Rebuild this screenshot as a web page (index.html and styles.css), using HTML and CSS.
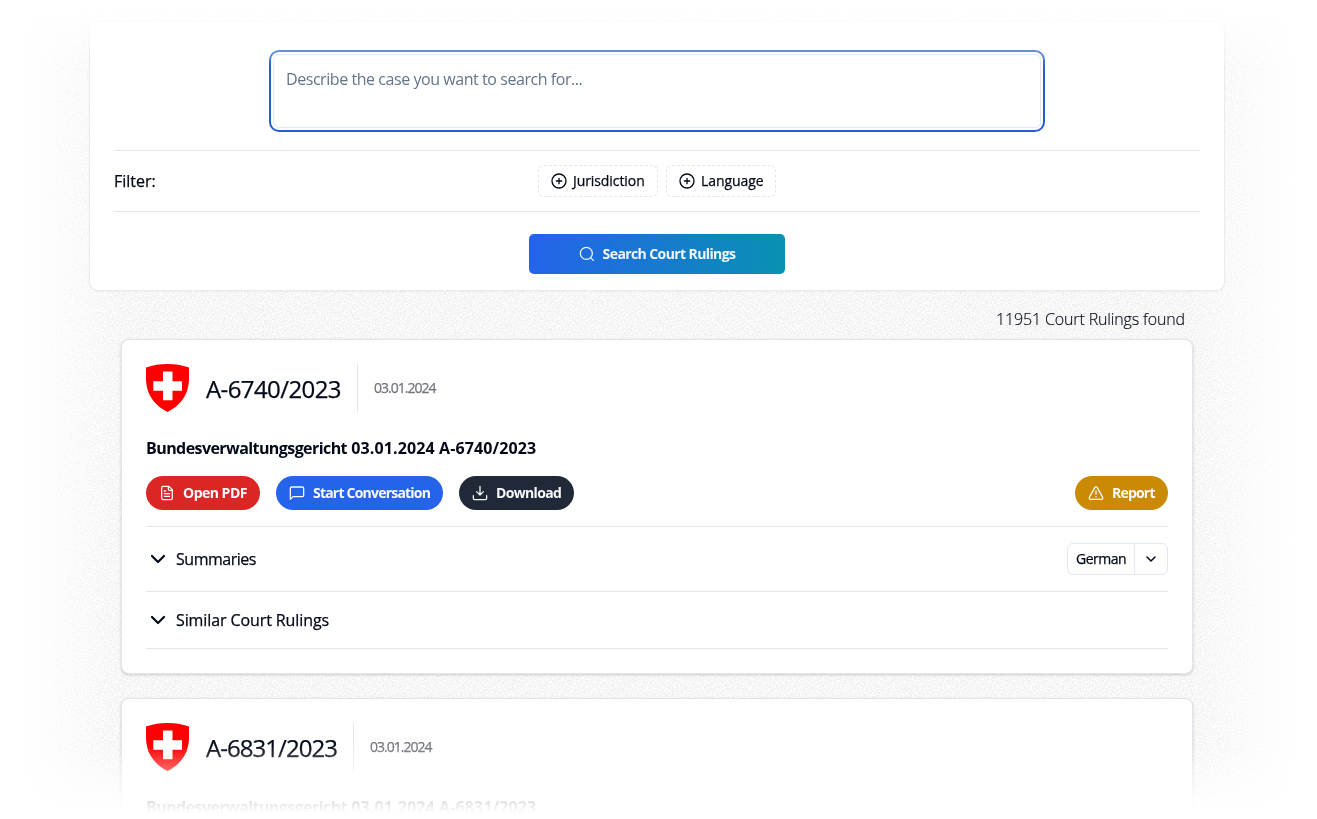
FILE: index.html
```
<!DOCTYPE html>
<html lang="en">
<head>
    <meta charset="UTF-8">
    <title>Court Rulings</title>
    <link rel="stylesheet" href="styles.css">
</head>
<body>

<div class="page">
    <svg class="noise" width="1317" height="819" aria-hidden="true">
        <filter id="grain" x="0" y="0" width="100%" height="100%" color-interpolation-filters="sRGB">
            <feTurbulence type="fractalNoise" baseFrequency="0.65" numOctaves="3" stitchTiles="stitch"/>
            <feColorMatrix values="0.15 0 0 0 0.892  0.15 0 0 0 0.892  0.15 0 0 0 0.892  0 0 0 0 1"/>
        </filter>
        <rect width="1317" height="819" filter="url(#grain)"/>
    </svg>

    <div class="search-card">
        <textarea class="search-input" placeholder="Describe the case you want to search for..."></textarea>
        <div class="filter-row">
            <span class="filter-label">Filter:</span>
            <div class="filter-buttons">
                <button class="filter-button jurisdiction">
                    <svg width="16" height="16" viewBox="0 0 24 24"><circle cx="12" cy="12" r="10.5"/><path d="M8 12h8M12 8v8"/></svg>
                    <span>Jurisdiction</span>
                </button>
                <button class="filter-button language">
                    <svg width="16" height="16" viewBox="0 0 24 24"><circle cx="12" cy="12" r="10.5"/><path d="M8 12h8M12 8v8"/></svg>
                    <span>Language</span>
                </button>
            </div>
        </div>
        <button class="search-button">
            <svg width="16" height="16" viewBox="0 0 24 24"><circle cx="11" cy="11" r="9"/><path d="m21.500 21.500-4-4"/></svg>
            <span>Search Court Rulings</span>
        </button>
    </div>

    <div class="results">
        <p class="count"><span>11951 Court Rulings found</span></p>

        <div class="card">
            <div class="card-head">
                <svg class="shield" width="43" height="48" viewBox="0 0 43 48">
                    <path fill="#f00" d="M0 3.6C7 1 14 0 21.500 0S36 1 43 3.600C43.600 15 43 25 38.500 32.500 34.500 39.500 28.500 44.500 21.500 48 14.500 44.500 8.500 39.500 4.500 32.500 0 25-.6 15 0 3.600z"/>
                    <path fill="#fff" d="M17 7.500h9.500v9.700h9.500v9.500h-9.500v9.600H17v-9.600H7.300v-9.500H17z"/>
                </svg>
                <h2>A-6740/2023</h2>
                <span class="date">03.01.2024</span>
            </div>
            <h3><span class="court">Bundesverwaltungsgericht</span> 03.01.2024 A-6740/2023</h3>
            <div class="actions">
                <button class="pill red">
                    <svg width="16" height="16" viewBox="0 0 24 24"><path d="M15 2H6a2 2 0 0 0-2 2v16a2 2 0 0 0 2 2h12a2 2 0 0 0 2-2V7zM14 2v4a2 2 0 0 0 2 2h4M10 9H8M16 13H8M16 17H8"/></svg>
                    <span>Open PDF</span>
                </button>
                <button class="pill blue">
                    <svg width="16" height="16" viewBox="0 0 24 24"><path d="M22 15.500a2 2 0 0 1-2 2H6l-4 4V5a2 2 0 0 1 2-2h16a2 2 0 0 1 2 2z"/></svg>
                    <span>Start Conversation</span>
                </button>
                <button class="pill dark">
                    <svg width="16" height="16" viewBox="0 0 24 24"><path d="M2 16v4a2 2 0 0 0 2 2h16a2 2 0 0 0 2-2v-4M7 10l5 5 5-5M12 15V2"/></svg>
                    <span>Download</span>
                </button>
                <button class="pill yellow">
                    <svg width="16" height="16" viewBox="0 0 24 24"><path d="m22 18.500-8.200-14.500a2.100 2.100 0 0 0-3.600 0L2 18.500a2 2 0 0 0 1.800 3h16.400a2 2 0 0 0 1.800-3zM12 9v5M12 17.500h.01"/></svg>
                    <span>Report</span>
                </button>
            </div>
            <div class="row summaries">
                <svg width="24" height="24" viewBox="0 0 24 24"><path d="m6 9 6 6 6-6"/></svg>
                <span class="summaries-text">Summaries</span>
                <div class="select">
                    <span class="select-value">German</span>
                    <span class="select-arrow">
                        <svg width="16" height="16" viewBox="0 0 16 16"><path d="m4 6 4 4 4-4"/></svg>
                    </span>
                </div>
            </div>
            <div class="row similar">
                <svg width="24" height="24" viewBox="0 0 24 24"><path d="m6 9 6 6 6-6"/></svg>
                <span class="similar-text">Similar Court Rulings</span>
            </div>
        </div>

        <div class="card">
            <div class="card-head">
                <svg class="shield" width="43" height="48" viewBox="0 0 43 48">
                    <path fill="#f00" d="M0 3.6C7 1 14 0 21.500 0S36 1 43 3.600C43.600 15 43 25 38.500 32.500 34.500 39.500 28.500 44.500 21.500 48 14.500 44.500 8.500 39.500 4.500 32.500 0 25-.6 15 0 3.600z"/>
                    <path fill="#fff" d="M17 7.500h9.500v9.700h9.500v9.500h-9.500v9.600H17v-9.600H7.300v-9.500H17z"/>
                </svg>
                <h2 class="narrow">A-6831/2023</h2>
                <span class="date">03.01.2024</span>
            </div>
            <h3><span class="court">Bundesverwaltungsgericht</span> 03.01.2024 A-6831/2023</h3>
        </div>
    </div>
</div>

</body>
</html>
```
FILE: styles.css
```
* {
    box-sizing: border-box;
}

body {
    margin: 0;
    background: #fff;
    color: #020817;
    font-family: "Segoe UI", "Open Sans", "Noto Sans", sans-serif;
    font-size: 16px;
    line-height: 24px;
    overflow: hidden;
}

svg {
    flex: none;
    fill: none;
    stroke: currentColor;
    stroke-width: 2;
    stroke-linecap: round;
    stroke-linejoin: round;
}

button {
    font-family: inherit;
    white-space: nowrap;
}

/* the whole page fades to white at the top and bottom */
.page {
    position: relative;
    height: 819px;
    padding-top: 22px;
    overflow: hidden;
    -webkit-mask-image: linear-gradient(transparent 10px, #000 68px, #000 745px, transparent 812px);
    mask-image: linear-gradient(transparent 10px, #000 68px, #000 745px, rgba(0, 0, 0, 0.14) 800px, transparent 813px);
}

.noise {
    position: absolute;
    top: 0;
    left: 0;
    z-index: -1;
    stroke: none;
    -webkit-mask-image: linear-gradient(90deg, transparent 20px, #000 125px, #000 1190px, transparent 1297px);
    mask-image: linear-gradient(90deg, transparent 20px, #000 125px, #000 1190px, transparent 1297px);
}

.search-card {
    width: 1134px;
    height: 268px;
    margin-left: 90px;
    padding: 32px 24px 16px;
    background: #fff;
    border-radius: 8px;
    box-shadow: 0 0 0 1px #e8ebf0, 0 1px 3px rgba(0, 0, 0, 0.08);
}

.search-input {
    display: block;
    width: 768px;
    height: 74px;
    margin: 0 auto 22px;
    padding: 12px 12px;
    border: 1px solid #e2e8f0;
    border-radius: 6px;
    box-shadow: 0 0 0 2px #fff, 0 0 0 4px #2460cd;
    font: inherit;
    letter-spacing: -0.44px;
    resize: none;
    outline: none;
}

.search-input::placeholder {
    color: #64748b;
}

.filter-row {
    display: grid;
    grid-template-columns: 1fr auto 1fr;
    align-items: center;
    height: 62px;
    border-top: 1px solid #e2e8e8;
    border-bottom: 1px solid #e2e8e8;
}

.filter-label,
.filter-button span,
.row {
    -webkit-text-stroke: 0.25px;
}

.filter-buttons {
    display: flex;
    gap: 8px;
}

.filter-button {
    display: flex;
    align-items: center;
    gap: 6px;
    height: 32px;
    padding: 0 0 1px 12px;
    background: #fff;
    border: 1px dashed #e2e8e8;
    border-radius: 6px;
    color: #020817;
    font-size: 14px;
    letter-spacing: -0.08px;
}

.jurisdiction {
    width: 120px;
}

.language {
    width: 110px;
}

.search-button {
    display: flex;
    align-items: center;
    justify-content: center;
    gap: 8px;
    width: 256px;
    height: 40px;
    margin: 22px auto 0;
    padding: 0 0 1px;
    border: none;
    border-radius: 5px;
    background: linear-gradient(90deg, #2563eb, #0891b2);
    color: #f1f7fc;
    font-size: 14px;
    font-weight: 700;
    letter-spacing: -0.6px;
}

.results {
    width: 1072px;
    margin-left: 121px;
}

.count {
    margin: 17px 8px 8px;
    text-align: right;
    font-weight: 300;
    letter-spacing: -0.14px;
    -webkit-text-stroke: 0.15px;
}

.card {
    height: 335px;
    margin-bottom: 24px;
    padding: 24px;
    background: #fff;
    border: 1px solid #e2e5eb;
    border-radius: 8px;
    box-shadow: 0 1px 3px rgba(0, 0, 0, 0.18);
}

.card-head {
    display: flex;
    align-items: center;
    height: 48px;
}

.shield {
    stroke: none;
}

h2 {
    width: 152px;
    height: 48px;
    margin: 0 0 0 17px;
    border-right: 1px solid #e2e8e8;
    font-size: 24px;
    font-weight: 400;
    letter-spacing: -0.6px;
    line-height: 50px;
    white-space: nowrap;
    -webkit-text-stroke: 0.25px;
}

.narrow {
    width: 148px;
    letter-spacing: -0.95px;
}

.date {
    margin-left: 16px;
    color: #71757c;
    font-size: 14px;
    letter-spacing: -1px;
    -webkit-text-stroke: 0.25px;
}

h3 {
    margin: 24px 0 16px;
    font-size: 16px;
    font-weight: 700;
    letter-spacing: 0.12px;
    white-space: nowrap;
}

.court {
    letter-spacing: -0.57px;
}

.actions {
    display: flex;
    gap: 16px;
    padding-bottom: 16px;
    border-bottom: 1px solid #e2e8e8;
}

.pill {
    display: flex;
    align-items: center;
    gap: 8px;
    height: 34px;
    padding: 0 0 1px 13px;
    border: none;
    border-radius: 17px;
    color: #f8fafc;
    font-size: 14px;
    font-weight: 700;
    letter-spacing: -0.65px;
}

.pill svg,
.search-button svg {
    stroke-width: 1.9;
}

.red {
    width: 114px;
    background: #dc2626;
    letter-spacing: -0.5px;
}

.blue {
    width: 167px;
    background: #2563eb;
    letter-spacing: -0.79px;
}

.dark {
    width: 115px;
    background: #1f2937;
}

.yellow {
    width: 93px;
    margin-left: auto;
    background: #ca8a04;
    letter-spacing: -0.8px;
}

.row {
    display: flex;
    align-items: center;
    gap: 6px;
    border-bottom: 1px solid #e2e8e8;
}

.row > svg {
    stroke-width: 2.2;
}

.summaries {
    height: 65px;
}

.summaries-text {
    letter-spacing: -0.48px;
}

.similar {
    height: 57px;
}

.similar-text {
    letter-spacing: -0.1px;
}

.select {
    display: flex;
    width: 101px;
    height: 32px;
    margin-left: auto;
    border: 1px solid #e2e8f0;
    border-radius: 6px;
    font-size: 14px;
    letter-spacing: -0.5px;
    line-height: 30px;
}

.select-value {
    width: 67px;
    padding-left: 8px;
    border-right: 1px solid #e2e8f0;
}

.select-arrow {
    display: flex;
    align-items: center;
    padding-left: 8px;
}

.select-arrow svg {
    stroke-width: 1.5;
}
```
